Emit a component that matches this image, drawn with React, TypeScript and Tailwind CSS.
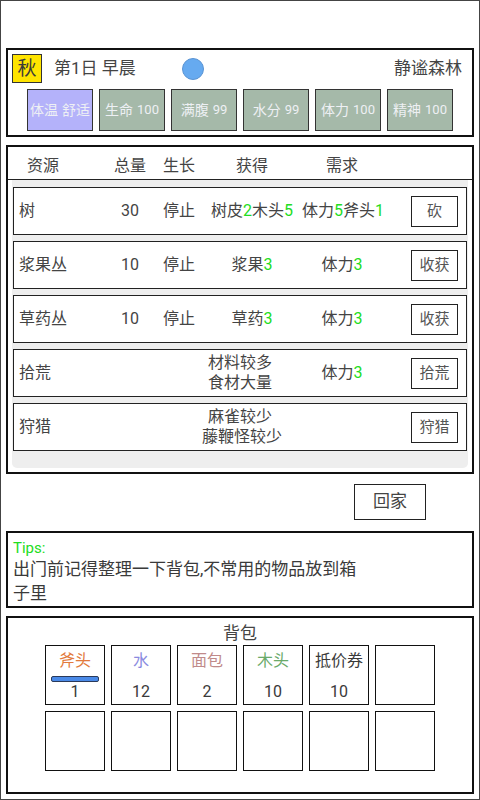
import React from 'react';

type Part = { t: string; g?: boolean };

type Row = {
  name: string;
  total: string;
  grow: string;
  gain: Part[] | string[];
  need: Part[];
  action: string;
  multi?: boolean;
};

const stats = [
  { label: '体温', value: '舒适', hot: true },
  { label: '生命', value: '100' },
  { label: '满腹', value: '99' },
  { label: '水分', value: '99' },
  { label: '体力', value: '100' },
  { label: '精神', value: '100' },
];

const rows: Row[] = [
  {
    name: '树',
    total: '30',
    grow: '停止',
    gain: [{ t: '树皮' }, { t: '2', g: true }, { t: '木头' }, { t: '5', g: true }],
    need: [{ t: '体力' }, { t: '5', g: true }, { t: '斧头' }, { t: '1', g: true }],
    action: '砍',
  },
  {
    name: '浆果丛',
    total: '10',
    grow: '停止',
    gain: [{ t: '浆果' }, { t: '3', g: true }],
    need: [{ t: '体力' }, { t: '3', g: true }],
    action: '收获',
  },
  {
    name: '草药丛',
    total: '10',
    grow: '停止',
    gain: [{ t: '草药' }, { t: '3', g: true }],
    need: [{ t: '体力' }, { t: '3', g: true }],
    action: '收获',
  },
  {
    name: '拾荒',
    total: '',
    grow: '',
    gain: ['材料较多', '食材大量'],
    need: [{ t: '体力' }, { t: '3', g: true }],
    action: '拾荒',
    multi: true,
  },
  {
    name: '狩猎',
    total: '',
    grow: '',
    gain: ['麻雀较少', '藤鞭怪较少'],
    need: [],
    action: '狩猎',
    multi: true,
  },
];

const items = [
  { name: '斧头', count: '1', color: 'text-[#e27a3c]', bar: true },
  { name: '水', count: '12', color: 'text-[#8a8ae0]' },
  { name: '面包', count: '2', color: 'text-[#c08a8a]' },
  { name: '木头', count: '10', color: 'text-[#6aaa6a]' },
  { name: '抵价券', count: '10', color: 'text-[#3a3a3a]' },
];

function Parts({ parts }: { parts: Part[] }) {
  return (
    <>
      {parts.map((p, i) => (
        <span key={i} className={p.g ? 'text-[#22dd22]' : ''}>
          {p.t}
        </span>
      ))}
    </>
  );
}

function StatusPanel() {
  return (
    <section className="border-2 border-[#111] px-[4px] pt-[4px] pb-[4px]">
      <div className="flex items-center h-[29px]">
        <div className="w-[30px] h-[29px] bg-[#ffe400] border border-[#333] flex items-center justify-center text-[19px] text-[#3a3a3a] leading-none">
          秋
        </div>
        <span className="ml-[12px] text-[17px] text-[#444]">第1日 早晨</span>
        <span className="ml-[46px] w-[22px] h-[22px] rounded-full bg-[#66aaf0] border border-[#5a94d4]" />
        <span className="ml-auto mr-[6px] text-[17px] text-[#444]">静谧森林</span>
      </div>
      <div className="flex gap-[6px] mt-[6px] pl-[15px]">
        {stats.map((s) => (
          <div
            key={s.label}
            className={`w-[66px] h-[42px] border border-[#333] flex items-center justify-center text-[#eef0f4] ${
              s.hot ? 'bg-[#b4b2fa]' : 'bg-[#a5b9a9]'
            }`}
          >
            <span className="text-[14px]">{s.label}</span>
            <span className={`ml-[4px] ${s.hot ? 'text-[14px]' : 'text-[13px]'}`}>{s.value}</span>
          </div>
        ))}
      </div>
    </section>
  );
}

function ResourcePanel() {
  return (
    <section className="mt-[8px] border-2 border-[#111] text-[16px] text-[#444]">
      <div className="flex items-center h-[33px] pt-[5px] border-b border-[#222]">
        <div className="w-[96px] pl-[19px]">资源</div>
        <div className="w-[52px] text-center">总量</div>
        <div className="w-[46px] text-center">生长</div>
        <div className="w-[100px] text-center">获得</div>
        <div className="w-[80px] text-center">需求</div>
      </div>
      <div className="mx-[4px] mb-[4px] bg-[#eeeeee] rounded-b-[5px] px-[1px] pt-[7px] pb-[17px] flex flex-col gap-[6px]">
        {rows.map((r) => (
          <div key={r.name} className="h-[48px] bg-white border border-[#222] flex items-center">
            <div className="w-[90px] pl-[5px]">{r.name}</div>
            <div className="w-[52px] text-center">{r.total}</div>
            <div className="w-[46px] text-center">{r.grow}</div>
            {r.multi ? (
              <div className="w-[100px] text-center leading-[20px] pr-[24px] whitespace-nowrap">
                {(r.gain as string[]).map((l) => (
                  <div key={l}>{l}</div>
                ))}
              </div>
            ) : (
              <div className="w-[100px] text-center whitespace-nowrap">
                <Parts parts={r.gain as Part[]} />
              </div>
            )}
            <div className="w-[80px] text-center whitespace-nowrap">
              <Parts parts={r.need} />
            </div>
            <button
              type="button"
              className="ml-auto mr-[8px] w-[47px] h-[31px] border border-[#222] text-[15px] text-[#555] bg-white"
            >
              {r.action}
            </button>
          </div>
        ))}
      </div>
    </section>
  );
}

function TipsPanel() {
  return (
    <section className="mt-[11px] border-2 border-[#111] px-[5px] pt-[6px] h-[77px]">
      <div className="text-[15px] leading-[18px] text-[#22dd22]">Tips:</div>
      <p className="w-[350px] text-[17px] leading-[24px] text-[#3a3a3a]">
        出门前记得整理一下背包,不常用的物品放到箱子里
      </p>
    </section>
  );
}

function BagPanel() {
  const cells = Array.from({ length: 12 }, (_, i) => items[i]);
  return (
    <section className="mt-[8px] border-2 border-[#111] pt-[3px] pb-[21px]">
      <div className="text-center text-[17px] leading-[24px] text-[#444]">背包</div>
      <div className="grid grid-cols-[repeat(6,60px)] gap-[6px] justify-center">
        {cells.map((it, i) => (
          <div key={i} className="h-[60px] border border-[#111] flex flex-col items-center pt-[5px]">
            {it && (
              <>
                <div className={`text-[16px] leading-[20px] whitespace-nowrap ${it.color}`}>{it.name}</div>
                <div className="mt-[5px] h-[6px] w-[48px]">
                  {it.bar && <div className="h-[6px] w-[48px] rounded-[2px] bg-[#4a8ae8] border border-[#2a3a5a]" />}
                </div>
                <div className="text-[16px] leading-[20px] text-[#3a3a3a]">{it.count}</div>
              </>
            )}
          </div>
        ))}
      </div>
    </section>
  );
}

export default function App() {
  return (
    <div
      className="h-[800px] w-[480px] border border-[#444] bg-white px-[5px] pt-[47px] flex flex-col"
      style={{ fontFamily: 'Roboto, "Noto Sans CJK SC", sans-serif' }}
    >
      <StatusPanel />
      <ResourcePanel />
      <button
        type="button"
        className="self-end mr-[48px] mt-[10px] w-[72px] h-[36px] border border-[#222] text-[17px] text-[#444] bg-white"
      >
        回家
      </button>
      <TipsPanel />
      <BagPanel />
    </div>
  );
}
